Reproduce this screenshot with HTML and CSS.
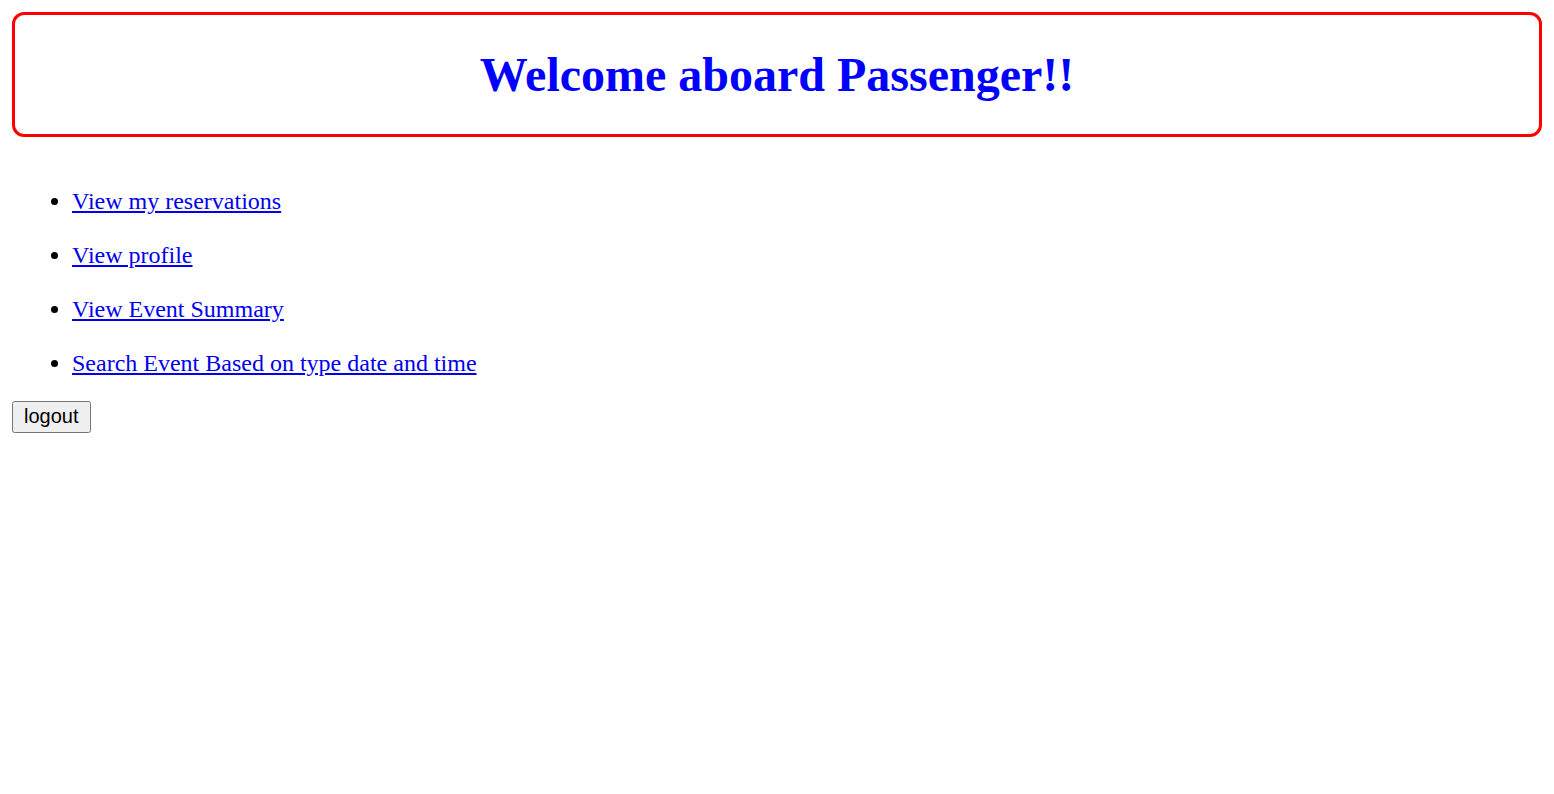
FILE: index.html
```html
<!DOCTYPE html>
<html>
<head>
<meta charset="utf-8">
<link rel="stylesheet" href="styles.css">
</head>
<body>
<div class="banner"><h1 class="title">Welcome aboard Passenger!!</h1></div>
<ul class="menu">
<li><a href="#">View my reservations</a></li>
<li><a href="#">View profile</a></li>
<li><a href="#">View Event Summary</a></li>
<li><a href="#">Search Event Based on type date and time</a></li>
</ul>
<button class="logout">logout</button>
</body>
</html>
```
FILE: styles.css
```css
body {
  margin: 12px;
  font-family: "Liberation Serif", "Times New Roman", serif;
}
.banner {
  border: 3px solid #ff0000;
  border-radius: 12px;
}
.title {
  font-size: 48px;
  font-weight: bold;
  color: #0000ff;
  text-align: center;
  margin: 32px 0;
}
.menu {
  font-size: 24px;
  padding-left: 60px;
  margin: 51px 0 24px;
}
.menu li {
  margin-bottom: 27px;
}
.menu li:last-child {
  margin-bottom: 0;
}
.menu a {
  color: #0000ee;
}
.logout {
  display: block;
  font-family: "Liberation Sans", Arial, sans-serif;
  font-size: 20px;
  padding: 2px 10px 3px;
}
```
